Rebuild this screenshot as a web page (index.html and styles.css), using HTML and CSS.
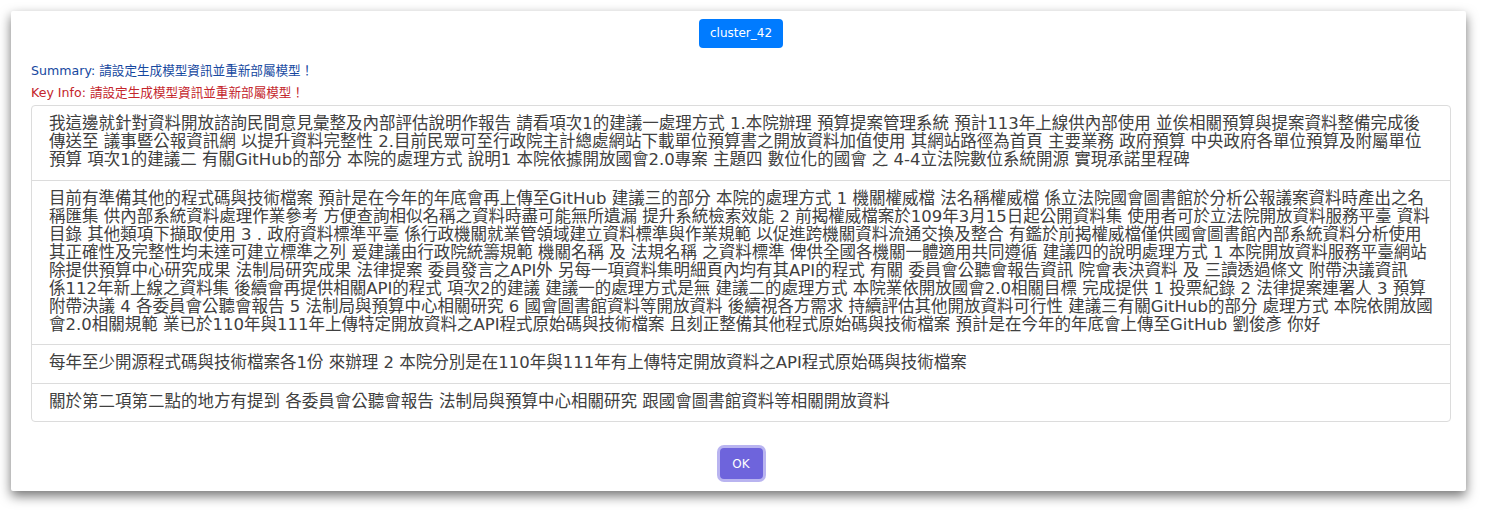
FILE: index.html
```html
<!DOCTYPE html>
<html lang="zh-Hant">
<head>
<meta charset="utf-8">
<title>cluster_42</title>
<link rel="stylesheet" href="styles.css">
</head>
<body>
<div class="popup">
  <div class="head">
    <span class="tag">cluster_42</span>
  </div>
  <div class="info summary">Summary: 請設定生成模型資訊並重新部屬模型！</div>
  <div class="info keyinfo">Key Info: 請設定生成模型資訊並重新部屬模型！</div>
  <ul class="list">
    <li class="item">我這邊就針對資料開放諮詢民間意見彙整及內部評估說明作報告 請看項次1的建議一處理方式 1.本院辦理 預算提案管理系統 預計113年上線供內部使用 並俟相關預算與提案資料整備完成後傳送至 議事暨公報資訊網 以提升資料完整性 2.目前民眾可至行政院主計總處網站下載單位預算書之開放資料加值使用 其網站路徑為首頁 主要業務 政府預算 中央政府各單位預算及附屬單位預算 項次1的建議二 有關GitHub的部分 本院的處理方式 說明1 本院依據開放國會2.0專案 主題四 數位化的國會 之 4-4立法院數位系統開源 實現承諾里程碑</li>
    <li class="item">目前有準備其他的程式碼與技術檔案 預計是在今年的年底會再上傳至GitHub 建議三的部分 本院的處理方式 1 機關權威檔 法名稱權威檔 係立法院國會圖書館於分析公報議案資料時產出之名稱匯集 供內部系統資料處理作業參考 方便查詢相似名稱之資料時盡可能無所遺漏 提升系統檢索效能 2 前揭權威檔案於109年3月15日起公開資料集 使用者可於立法院開放資料服務平臺 資料目錄 其他類項下擷取使用 3 . 政府資料標準平臺 係行政機關就業管領域建立資料標準與作業規範 以促進跨機關資料流通交換及整合 有鑑於前揭權威檔僅供國會圖書館內部系統資料分析使用 其正確性及完整性均未達可建立標準之列 爰建議由行政院統籌規範 機關名稱 及 法規名稱 之資料標準 俾供全國各機關一體適用共同遵循 建議四的說明處理方式 1 本院開放資料服務平臺網站除提供預算中心研究成果 法制局研究成果 法律提案 委員發言之API外 另每一項資料集明細頁內均有其API的程式 有關 委員會公聽會報告資訊 院會表決資料 及 三讀透過條文 附帶決議資訊<span class="nobr">係112年</span>新上線之資料集 後續會再提供相關API的程式 項次2的建議 建議一的處理方式是無 建議二的處理方式 本院業依開放國會2.0相關目標 完成提供 1 投票紀錄 2 法律提案連署人 3 預算附帶決議 4 各委員會公聽會報告 5 法制局與預算中心相關研究 6 國會圖書館資料等開放資料 後續視各方需求 持續評估其他開放資料可行性 建議三有關GitHub的部分 處理方式 本院依開放國會2.0相關規範 業已於110年與111年上傳特定開放資料之API程式原始碼與技術檔案 且刻正整備其他程式原始碼與技術檔案 預計是在今年的年底會上傳至GitHub 劉俊彥 你好</li>
    <li class="item">每年至少開源程式碼與技術檔案各1份 來辦理 2 本院分別是在110年與111年有上傳特定開放資料之API程式原始碼與技術檔案</li>
    <li class="item">關於第二項第二點的地方有提到 各委員會公聽會報告 法制局與預算中心相關研究 跟國會圖書館資料等相關開放資料</li>
  </ul>
  <div class="actions">
    <button class="ok" type="button">OK</button>
  </div>
</div>
</body>
</html>
```

FILE: styles.css
```css
html, body {
  margin: 0;
  padding: 0;
  background: #ffffff;
}

body {
  font-family: "DejaVu Sans", "Noto Sans CJK TC", sans-serif;
  padding: 11px 19px 20px 11px;
}

.popup {
  background: #ffffff;
  border-radius: 2px;
  box-shadow: 0 5px 12px rgba(0, 0, 0, 0.55);
  padding: 8px 15px 9px 20px;
  height: 480px;
  box-sizing: border-box;
  display: flex;
  flex-direction: column;
}

.head {
  display: flex;
  justify-content: center;
}

.tag {
  display: inline-block;
  background: #007bff;
  color: #ffffff;
  font-size: 12px;
  line-height: 29px;
  height: 29px;
  padding: 0 11px;
  border-radius: 4px;
}

.info {
  font-size: 12.6px;
  line-height: 22px;
}

.summary {
  color: #1648a0;
  margin-top: 12px;
}

.keyinfo {
  color: #c4252b;
}

.list {
  list-style: none;
  margin: 1px 0 0 0;
  padding: 0;
  border: 1px solid #dcdcdc;
  border-radius: 4px;
}

.item {
  font-size: 16.5px;
  line-height: 18px;
  color: #404040;
  padding: 9px 17px 10.5px 17px;
  border-top: 1px solid #dcdcdc;
}

.item:first-child {
  border-top: none;
}

.nobr {
  white-space: nowrap;
}

.actions {
  display: flex;
  justify-content: center;
  margin-top: 26px;
}

.ok {
  font-family: "DejaVu Sans", sans-serif;
  font-size: 12px;
  color: #ffffff;
  background: #6e64dc;
  border: none;
  border-radius: 4px;
  width: 43px;
  height: 31px;
  padding: 0;
  box-shadow: 0 0 0 3px #b9b4f0;
}
```
